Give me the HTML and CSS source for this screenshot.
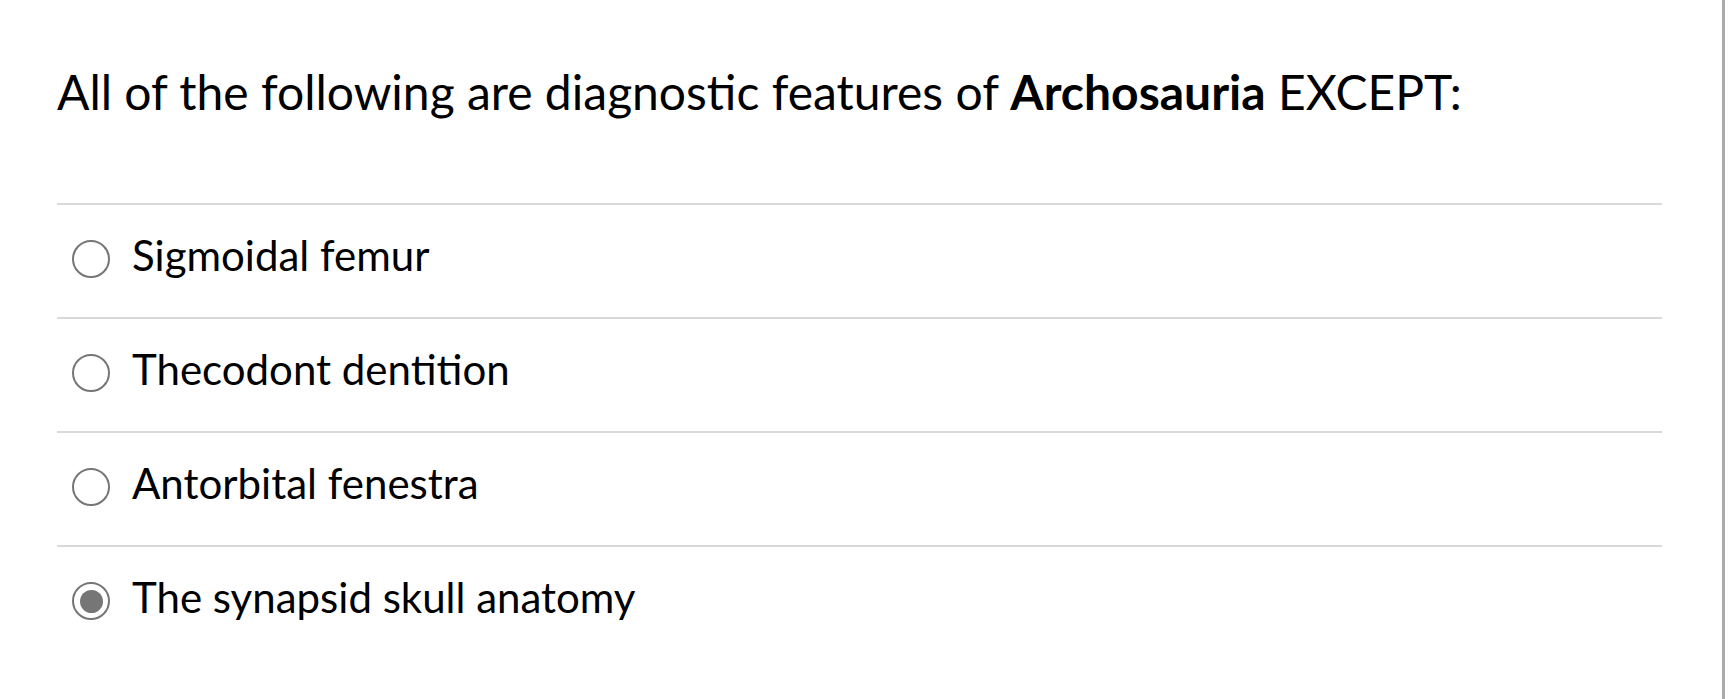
FILE: index.html
```html
<!DOCTYPE html>
<html lang="en">
<head>
<meta charset="utf-8">
<title>Quiz question</title>
<link rel="stylesheet" href="styles.css">
</head>
<body>
<div class="frame">
  <div class="question">
    <p class="prompt">All of the following are diagnostic features of <strong>Archosauria</strong> EXCEPT:</p>
    <div class="answers">
      <label class="answer"><span class="radio"></span><span class="answer-text">Sigmoidal femur</span></label>
      <label class="answer"><span class="radio"></span><span class="answer-text">Thecodont dentition</span></label>
      <label class="answer"><span class="radio"></span><span class="answer-text">Antorbital fenestra</span></label>
      <label class="answer"><span class="radio checked"></span><span class="answer-text">The synapsid skull anatomy</span></label>
    </div>
  </div>
</div>
</body>
</html>
```
FILE: styles.css
```css
html, body {
  margin: 0;
  padding: 0;
  background: #ffffff;
}

body {
  font-family: "Lato", "Noto Sans", sans-serif;
  color: #000000;
}

.frame {
  width: 1725px;
  height: 699px;
  box-sizing: border-box;
  border-right: 3px solid #ababab;
}

.question {
  padding: 63px 60px 0 57px;
}

.prompt {
  margin: 0 0 82px 0;
  font-size: 48px;
  line-height: 58px;
  font-weight: 400;
}

.prompt strong {
  font-weight: 700;
}

.answers {
  display: flex;
  flex-direction: column;
}

.answer {
  display: flex;
  align-items: flex-start;
  gap: 22px;
  border-top: 2px solid #d9d9d9;
  padding: 25px 0 37px 15px;
}

.radio {
  flex: none;
  width: 38px;
  height: 38px;
  margin-top: 10px;
  box-sizing: border-box;
  border: 2.5px solid #767676;
  border-radius: 50%;
  display: flex;
  align-items: center;
  justify-content: center;
}

.radio.checked::after {
  content: "";
  width: 23px;
  height: 23px;
  border-radius: 50%;
  background: #767676;
}

.answer-text {
  font-size: 42px;
  line-height: 50px;
}
```
